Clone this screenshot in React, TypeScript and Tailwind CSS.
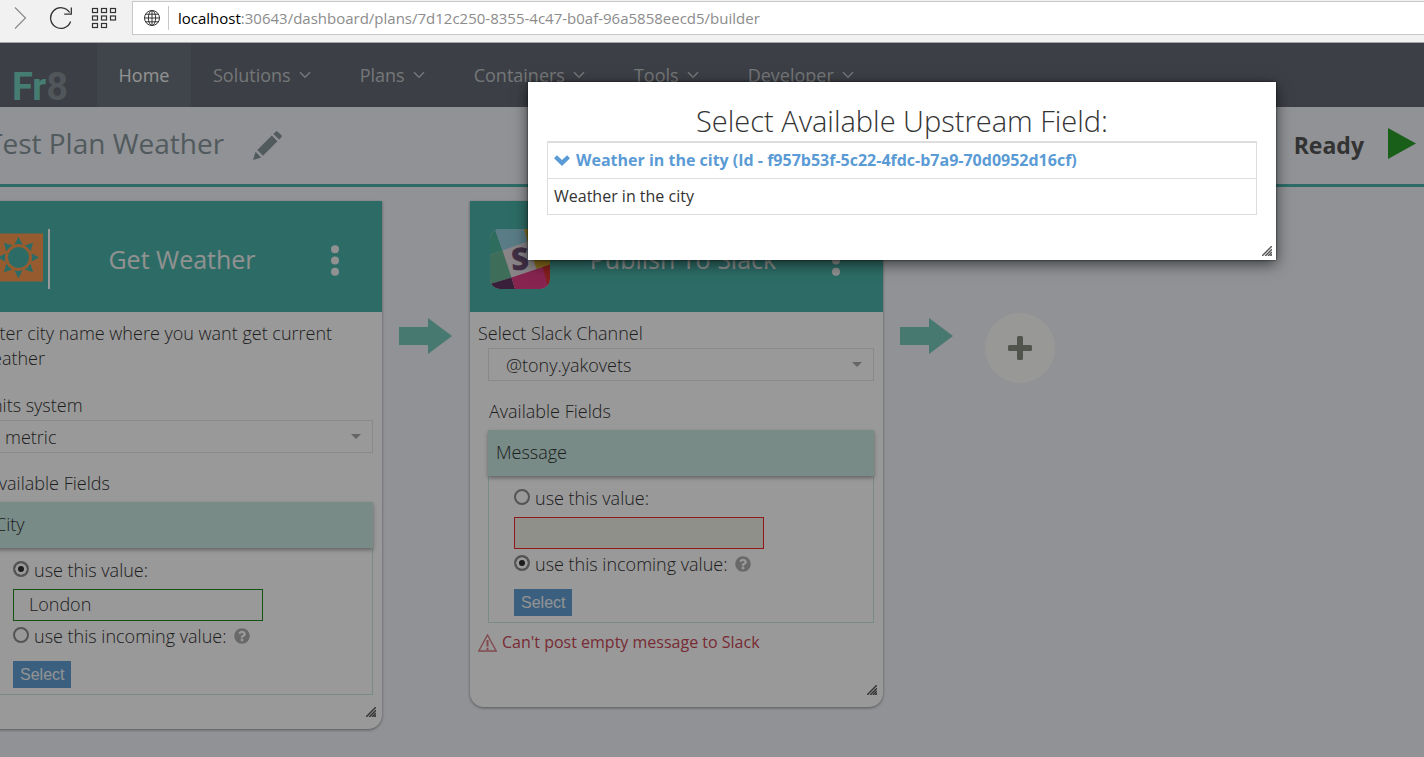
import React from "react";
import { FaQuestionCircle } from "react-icons/fa";

const menus = ["Solutions", "Plans", "Containers", "Tools", "Developer"];

function BrowserBar() {
  return (
    <div className="flex h-[43px] items-start border-b border-[#a3a5a8] bg-[#f1f1f1]">
      <div className="flex h-[35px] w-[132px] shrink-0 items-center pl-3">
        <button type="button" aria-label="Forward" className="w-[37px]">
          <svg width="16" height="24" viewBox="0 0 16 24" fill="none" stroke="#8a8a8a" strokeWidth="1.2">
            <path d="M3 1.5 L13.5 12 L3 22.5" />
          </svg>
        </button>
        <button type="button" aria-label="Reload" className="w-[42px]">
          <svg width="24" height="24" viewBox="0 0 24 24" fill="none" stroke="#333" strokeWidth="1.3">
            <path d="M21.6 15.5 A10.3 10.3 0 1 1 20.6 6.5" />
            <path d="M22.3 1.5 V8.2 H15.2" />
          </svg>
        </button>
        <button type="button" aria-label="Apps">
          <svg width="26" height="22" viewBox="0 0 26 22" fill="none" stroke="#333" strokeWidth="1.2">
            {[0, 1, 2].map((r) =>
              [0, 1, 2].map((c) =>
                r === 2 && c === 2 ? null : (
                  <rect key={`${r}${c}`} x={1.5 + c * 9} y={1.5 + r * 7.5} width="5" height="4" />
                )
              )
            )}
          </svg>
        </button>
      </div>
      <div className="mt-px flex h-[34px] min-w-0 flex-1 items-center border border-r-0 border-[#c8c8c8] bg-white pl-2.5">
        <svg width="18" height="18" viewBox="0 0 18 18" fill="none" stroke="#333" strokeWidth="1">
          <circle cx="9" cy="9" r="7.5" />
          <ellipse cx="9" cy="9" rx="3.6" ry="7.5" />
          <path d="M9 1.5V16.5M1.5 9H16.5M2.8 5.2H15.2M2.8 12.8H15.2" />
        </svg>
        <div className="ml-[7px] h-6 border-l border-[#c8c8c8]" />
        <p className="ml-[9px] truncate text-[15px] text-[#8c8c8c]">
          <span className="text-black">localhost</span>:30643/dashboard/plans/7d12c250-8355-4c47-b0af-96a5858eecd5/builder
        </p>
      </div>
    </div>
  );
}

function NavBar() {
  return (
    <nav className="flex h-16 bg-[#646973] text-[18px] text-[#c2c6ca]">
      <a
        href="#home"
        aria-label="Fr8"
        className="flex w-[97px] shrink-0 items-end pl-3 font-['Roboto',sans-serif] text-[38px] leading-10 font-bold text-[#73d0c0]"
      >
        Fr<span className="text-[#868f94]">8</span>
      </a>
      <a href="#home" className="flex w-[94px] items-center justify-center bg-[#6c747d] text-[#f4f4f4]">
        Home
      </a>
      {menus.map((m) => (
        <a key={m} href={"#" + m.toLowerCase()} className="flex items-center gap-2 pr-[27px] pl-[22px]">
          {m}
          <svg width="12" height="8" viewBox="0 0 12 8" fill="none" stroke="currentColor" strokeWidth="1.5">
            <path d="M1 1.2 L6 6.2 L11 1.2" />
          </svg>
        </a>
      ))}
    </nav>
  );
}

function PlanHeader() {
  return (
    <header className="flex h-20 items-center justify-between border-b-[3px] border-[#4bb5aa] pr-2">
      <div className="-ml-[13px] flex items-center">
        <h1 className="pb-1.5 text-[28px] text-[#87969b]">Test Plan Weather</h1>
        <button type="button" aria-label="Rename plan" className="ml-[29px]">
          <svg width="29" height="29" viewBox="0 0 29 29" fill="#87969b">
            <path d="M0 29 L2.6 20.8 L8.2 26.4 Z" />
            <path d="M4.3 19 L18.8 4.5 L24.5 10.2 L10 24.7 Z" />
            <path d="M20.4 2.9 L22.6 0.8 Q23.8 -0.2 25 0.9 L28.2 4.1 Q29.2 5.3 28.2 6.4 L26.1 8.6 Z" />
          </svg>
        </button>
      </div>
      <div className="flex items-center gap-6">
        <span className="text-[23px] font-bold text-[#555]">Ready</span>
        <button type="button" aria-label="Run plan" className="pb-1">
          <svg width="28" height="31" viewBox="0 0 28 31" fill="#2b9f2b">
            <path d="M0 0 L28 15.5 L0 31 Z" />
          </svg>
        </button>
      </div>
    </header>
  );
}

function Grip({ className }: { className: string }) {
  return (
    <svg className={className} width="10" height="10" viewBox="0 0 10 10" stroke="#5a5a5a" strokeWidth="1.5">
      <path d="M0 10 L10 0 M3.2 10 L10 3.2 M6 10 L10 6 M8.4 10 L10 8.4" />
    </svg>
  );
}

function SunIcon() {
  return (
    <div className="flex h-[60px] w-[61px] items-center border-r-2 border-white pb-[3px] pl-1.5">
      <svg width="48" height="49" viewBox="0 0 48 48" fill="#4bb5aa">
        <rect width="48" height="48" fill="#fa9a50" />
        <circle cx="23.5" cy="24" r="10.5" />
        {[0, 45, 90, 135, 180, 225, 270, 315].map((a) => (
          <path key={a} d="M19.3 11.2 L23.5 3.3 L27.7 11.2 Q23.5 9.8 19.3 11.2 Z" transform={`rotate(${a} 23.5 24)`} />
        ))}
      </svg>
    </div>
  );
}

function SlackIcon() {
  return (
    <svg width="60" height="60" viewBox="0 0 60 60">
      <defs>
        <clipPath id="tile">
          <rect width="60" height="60" rx="10" />
        </clipPath>
      </defs>
      <g clipPath="url(#tile)">
        <rect width="60" height="60" fill="#e4dce2" />
        <path d="M0 0 H5 L12.5 21.5 L0 26 Z" fill="#4db59c" />
        <path d="M5 0 H34 L37.5 12.5 L12.5 21.5 Z" fill="#96cfe0" />
        <path d="M34 0 H60 V5 L37.5 12.5 Z" fill="#d9b83f" />
        <path d="M0 26 L12.5 21.5 L21.5 48.5 L0 55 Z" fill="#68b895" />
        <path d="M37.5 12.5 L60 5 V36 L46.5 40 Z" fill="#e0b22f" />
        <path d="M0 55 L21.5 48.5 L25 60 H0 Z" fill="#5f3561" />
        <path d="M21.5 48.5 L53 38 L60 60 H25 Z" fill="#e23c85" />
        <path d="M52.5 38 L60 35.5 V60 H59 Z" fill="#dd3530" />
      </g>
      <text x="30" y="41" textAnchor="middle" fontSize="31" fontWeight="800" fill="#6b4f73" transform="rotate(-4 30 30)">
        S
      </text>
    </svg>
  );
}

function ActivityCard({ icon, title, children }: { icon: React.ReactNode; title: string; children: React.ReactNode }) {
  return (
    <section className="relative w-[413px] shrink-0 rounded-b-[14px] bg-white shadow-[0_1px_3px_rgba(0,0,0,0.4)]">
      <div className="flex h-[111px] items-center bg-[#4bb5aa] pt-1 pr-[27px] pl-5 text-white">
        <div className="w-[60px]">{icon}</div>
        <h2 className="flex-1 pt-0.5 text-center text-[25px] font-normal text-[#f2f2f2]">{title}</h2>
        <button type="button" aria-label={title + " options"} className="flex w-10 justify-center pt-1">
          <svg width="8" height="31" viewBox="0 0 8 31" fill="#f2f2f2">
            <circle cx="4" cy="4.2" r="4" />
            <circle cx="4" cy="15.5" r="4" />
            <circle cx="4" cy="26.8" r="4" />
          </svg>
        </button>
      </div>
      {children}
      <Grip className="absolute right-1.5 bottom-3" />
    </section>
  );
}

function Dropdown({ id, value }: { id: string; value: string }) {
  return (
    <div className="relative mr-[9px] ml-[18px]">
      <select
        id={id}
        defaultValue={value}
        className="block h-[33px] w-full appearance-none border border-[#e4e4e4] bg-white pt-0.5 pl-[17px] text-[18px] font-light"
      >
        <option>{value}</option>
      </select>
      <svg className="pointer-events-none absolute top-3.5 right-3" width="10" height="5" viewBox="0 0 10 5" fill="#a8a8a8">
        <path d="M0 0 H10 L5 5 Z" />
      </svg>
    </div>
  );
}

const radioStyle =
  "mb-0.5 h-4 w-4 appearance-none rounded-full border-2 border-[#8c8c8c] bg-white checked:bg-[#303030] checked:shadow-[inset_0_0_0_3px_white]";

function FieldPanel({ name, text, incoming }: { name: string; text: string; incoming?: boolean }) {
  return (
    <div className="mr-[9px] ml-[18px]">
      <p className="relative flex h-[46px] items-center bg-[#c8e8e1] pb-0.5 pl-2 shadow-[0_2px_4px_rgba(0,0,0,0.35)]">{name}</p>
      <div className="border border-t-0 border-[#c8e8e1] pt-[9px] pb-[6px] pl-[25px]">
        <label className="flex h-[26px] items-center gap-[5px]">
          <input type="radio" name={name} defaultChecked={!incoming} className={radioStyle} />
          use this value:
        </label>
        <input
          aria-label={name + " value"}
          defaultValue={text}
          className={
            incoming
              ? "mt-1.5 block h-8 w-[250px] border border-[#f02828] bg-[#eef0e4] px-[15px]"
              : "mt-1.5 block h-8 w-[250px] border border-[#228b22] px-[15px] pb-0.5"
          }
        />
        <div className="mt-0.5 flex h-[26px] items-center gap-2">
          <label className="flex items-center gap-[5px]">
            <input type="radio" name={name} defaultChecked={incoming} className={radioStyle} />
            use this incoming value:
          </label>
          <FaQuestionCircle size={16} className="text-[#b0b0b0]" />
        </div>
        <button type="button" className="mt-3 block h-[27px] bg-[#63a0d4] px-[7px] font-['Liberation_Sans'] text-[16px] text-[#f4f4f4]">
          Select
        </button>
      </div>
    </div>
  );
}

function Arrow() {
  return (
    <svg className="mx-[17px] mt-[117px] shrink-0" width="54" height="36" viewBox="0 0 54 36" fill="#78cabb">
      <path d="M0 9 H29 V0 L53 18 L29 36 V27 H0 Z" />
    </svg>
  );
}

function Canvas() {
  return (
    <main className="-ml-[31px] flex items-start pt-3.5 pb-7 text-[18px] leading-[25px] font-light text-[#333]">
      <ActivityCard icon={<SunIcon />} title="Get Weather">
        <p className="px-2.5 pt-[9px]">Enter city name where you want get current weather</p>
        <label htmlFor="units" className="block px-2.5 pt-[22px] pb-0.5">
          Units system
        </label>
        <Dropdown id="units" value="metric" />
        <p className="pt-[18px] pb-[6px] pl-[19px]">Available Fields</p>
        <FieldPanel name="City" text="London" />
        <div className="h-[34px]" />
      </ActivityCard>
      <Arrow />
      <ActivityCard icon={<SlackIcon />} title="Publish To Slack">
        <label htmlFor="channel" className="block px-2 pt-[9px] pb-0.5">
          Select Slack Channel
        </label>
        <Dropdown id="channel" value="@tony.yakovets" />
        <p className="pt-[18px] pb-[6px] pl-[19px]">Available Fields</p>
        <FieldPanel name="Message" text="" incoming />
        <p className="flex items-center gap-[5px] px-2 pt-[7px] pb-[52px] text-[16px] font-normal text-[#c84858]">
          <svg width="19" height="18" viewBox="0 0 19 18" fill="none" stroke="#d87c84" strokeWidth="1.4">
            <path d="M9.5 1 L18.2 17 H0.8 Z" />
            <path d="M9.5 6 V12.4 M9.5 13.8 V16" strokeWidth="2" />
          </svg>
          Can't post empty message to Slack
        </p>
      </ActivityCard>
      <Arrow />
      <button
        type="button"
        aria-label="Add activity"
        className="mt-28 ml-3.5 flex h-[70px] w-[70px] shrink-0 items-center justify-center rounded-full bg-[#fdfdfb]"
      >
        <svg width="24" height="24" viewBox="0 0 24 24" fill="#858d80">
          <rect x="9" y="0" width="6" height="24" rx="1.5" />
          <rect x="0" y="9" width="24" height="6" rx="1.5" />
        </svg>
      </button>
    </main>
  );
}

function FieldDialog() {
  return (
    <div
      role="dialog"
      aria-labelledby="dialog-title"
      className="absolute top-[39px] left-[528px] w-[748px] bg-white px-[19px] pt-[19px] pb-[45px] text-[#333] shadow-[0_4px_14px_rgba(0,0,0,0.6),0_0_2px_rgba(0,0,0,0.7)]"
    >
      <h2 id="dialog-title" className="text-center text-[29px] leading-10 font-light">
        Select Available Upstream Field:
      </h2>
      <table className="w-full border-collapse border border-[#ddd] text-left text-[16px] leading-5">
        <thead>
          <tr className="h-9 border-t-2 border-b border-[#ddd]">
            <th className="px-1.5 font-bold text-[#5b9bd5]">
              <button type="button" className="flex items-center gap-1.5">
                <svg width="16" height="11" viewBox="0 0 16 11" fill="currentColor">
                  <path d="M0 3.2 L2.9 0.3 L8 5 L13.1 0.3 L16 3.2 L8 11 Z" />
                </svg>
                Weather in the city (Id - f957b53f-5c22-4fdc-b7a9-70d0952d16cf)
              </button>
            </th>
          </tr>
        </thead>
        <tbody>
          <tr className="h-9">
            <td className="px-1.5">Weather in the city</td>
          </tr>
        </tbody>
      </table>
      <Grip className="absolute right-1 bottom-1" />
    </div>
  );
}

export default function App() {
  return (
    <div className="flex min-h-screen flex-col font-['Open_Sans',sans-serif]">
      <BrowserBar />
      <div className="relative flex flex-1 flex-col overflow-hidden bg-[#f1f3f8]">
        <NavBar />
        <PlanHeader />
        <Canvas />
        <div className="absolute inset-0 bg-black/40" />
        <FieldDialog />
      </div>
    </div>
  );
}
